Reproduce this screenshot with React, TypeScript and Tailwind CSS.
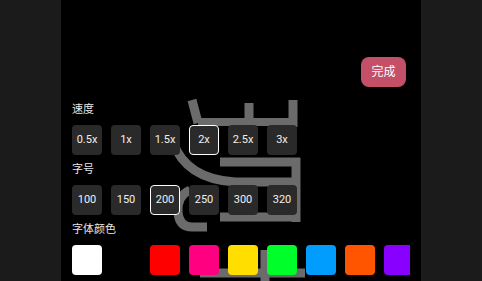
import React, { useState } from 'react';

const speeds = ['0.5x', '1x', '1.5x', '2x', '2.5x', '3x'];
const sizes = ['100', '150', '200', '250', '300', '320'];
const colors = ['#ffffff', '#000000', '#ff0000', '#ff0080', '#ffde00', '#00ff2a', '#009dff', '#ff5500', '#8800ff'];

const font = { fontFamily: 'Roboto, "Noto Sans CJK SC", sans-serif' };

// partially drawn character behind the panel (page coordinates, shifted by the column offset)
const Glyph: React.FC = () => (
  <svg className="absolute left-0 top-0" width={360} height={281} viewBox="61 0 360 281">
    <g fill="none" stroke="#6b6b6b" strokeWidth={9} strokeLinecap="butt" strokeLinejoin="miter">
      <path d="M192,100 L198,123" />
      <path d="M249,103 L249,122" />
      <path d="M293,100 L293,127" />
      <path d="M198,122 L297,122" strokeWidth={8} />
      <path d="M173,142 Q186,179 235,182 L296,182" />
      <path d="M220,162 L300,162" />
      <path d="M296,158 L296,222" />
      <path d="M220,217 L300,217" />
      <path d="M190,190 Q177,196 178,212 Q179,227 192,227 L207,227" />
      <path d="M265,250 L265,281" />
      <path d="M200,273 L305,273" />
    </g>
  </svg>
);

const Label: React.FC<{ text: string }> = ({ text }) => (
  <div className="h-4 leading-4 text-[11px] text-[#e6e6e6]">{text}</div>
);

const App: React.FC = () => {
  const [speed, setSpeed] = useState('2x');
  const [size, setSize] = useState('200');
  const [color, setColor] = useState('#ffffff');

  return (
    <div className="w-[482px] h-[281px] bg-[#1b1b1b] flex justify-center overflow-hidden" style={font}>
      <div className="relative w-[360px] h-full bg-black">
        <Glyph />
        <div className="relative flex flex-col pl-[11px] pr-[11px]">
          <div className="flex justify-end pt-[57px] pr-[4px]">
            <button className="w-[45px] h-[30px] rounded-[8px] bg-[#c45068] text-white text-[12px]">完成</button>
          </div>

          <div className="mt-[15px] flex flex-col gap-[7px]">
            <Label text="速度" />
            <div className="flex gap-[9px]">
              {speeds.map(s => (
                <button
                  key={s}
                  onClick={() => setSpeed(s)}
                  className={
                    'w-[30px] h-[30px] rounded-[4px] bg-[#2a2a2a] text-[11px] text-[#f0f0f0] ' +
                    (speed === s ? 'border border-white' : '')
                  }
                >
                  {s}
                </button>
              ))}
            </div>
          </div>

          <div className="mt-[7px] flex flex-col gap-[7px]">
            <Label text="字号" />
            <div className="flex gap-[9px]">
              {sizes.map(s => (
                <button
                  key={s}
                  onClick={() => setSize(s)}
                  className={
                    'w-[30px] h-[30px] rounded-[4px] bg-[#2a2a2a] text-[11px] text-[#f0f0f0] ' +
                    (size === s ? 'border border-white' : '')
                  }
                >
                  {s}
                </button>
              ))}
            </div>
          </div>

          <div className="mt-[7px] flex flex-col gap-[7px]">
            <Label text="字体颜色" />
            <div className="flex gap-[9px] overflow-hidden">
              {colors.map(c => (
                <button
                  key={c}
                  onClick={() => setColor(c)}
                  className="w-[30px] h-[30px] shrink-0 rounded-[4px]"
                  style={{ backgroundColor: c }}
                  aria-pressed={color === c}
                />
              ))}
            </div>
          </div>
        </div>
      </div>
    </div>
  );
};

export default App;
